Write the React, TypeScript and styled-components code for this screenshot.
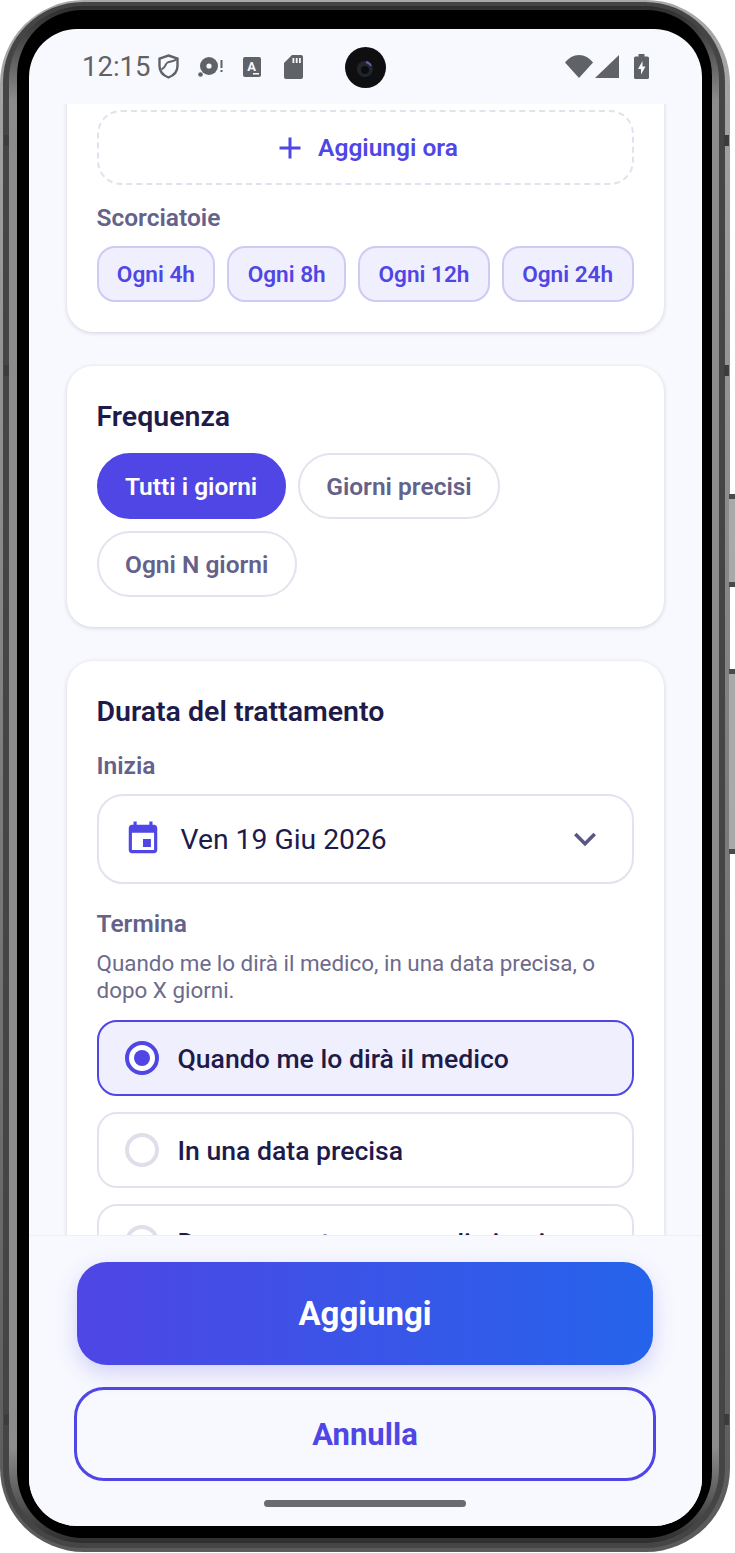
import React from "react";
import styled, { createGlobalStyle } from "styled-components";

const GlobalStyle = createGlobalStyle`
    html, body {
        margin: 0;
        padding: 0;
        background: #fff;
        font-family: Roboto, "Noto Sans", sans-serif;
    }
    * { box-sizing: border-box; }
`;

const Page = styled.div`
    position: relative;
    width: 735px;
    height: 1553px;
    overflow: hidden;
    background: #fff;
`;

const SideButton = styled.div<{ $top: number; $height: number }>`
    position: absolute;
    right: 0;
    top: ${(p) => p.$top}px;
    width: 6px;
    height: ${(p) => p.$height}px;
    background: #a9a9a9;
    border-top: 5px solid #4a4a4a;
    border-bottom: 5px solid #4a4a4a;
`;

const AntennaBand = styled.div<{ $top: number; $side: "left" | "right" }>`
    position: absolute;
    ${(p) => p.$side}: ${(p) => (p.$side === "left" ? 4 : 6)}px;
    top: ${(p) => p.$top}px;
    width: 5px;
    height: 11px;
    background: #3c3c3c;
`;

const PhoneShell = styled.div`
    width: 730px;
    height: 1552px;
    padding: 2px 5px 4px 3px;
    border-radius: 84px;
    background: linear-gradient(180deg, #a8a8a8, #7d7d7d 50%, #5a5a5a);
`;

const MidBand = styled.div`
    height: 100%;
    padding: 4px 6px 5px 6px;
    border-radius: 80px;
    background: #454545;
`;

const InnerBand = styled.div`
    height: 100%;
    padding: 4px 7px 5px 8px;
    border-radius: 74px;
    background: linear-gradient(
        180deg,
        #2e2e2e 0,
        #444 30px,
        #8c8c8c 95px,
        #8c8c8c calc(100% - 95px),
        #4a4a4a calc(100% - 30px),
        #2e2e2e 100%
    );
`;

const Bezel = styled.div`
    height: 100%;
    padding: 19px 10px 12px 12px;
    border-radius: 66px;
    background: #000;
`;

const Screen = styled.div`
    position: relative;
    display: flex;
    flex-direction: column;
    height: 100%;
    overflow: hidden;
    border-radius: 48px;
    background: #f8f9fe;
`;

const StatusBar = styled.div`
    flex: none;
    display: flex;
    align-items: center;
    height: 75px;
    padding: 0 53px 0 53px;
    color: #5f6368;
`;

const Clock = styled.span`
    font-size: 27.5px;
    margin-right: 8px;
    line-height: 1;
`;

const StatusIcon = styled.svg<{ $gap?: number }>`
    display: block;
    flex: none;
    margin-right: ${(p) => p.$gap ?? 0}px;
`;

const StatusRight = styled.div`
    margin-left: auto;
    display: flex;
    align-items: center;
    gap: 2px;
`;

const Camera = styled.div`
    position: absolute;
    left: 316px;
    top: 18px;
    width: 41px;
    height: 41px;
    border-radius: 50%;
    background: #0f0f12;
`;

const Lens = styled.svg`
    display: block;
`;

const ScrollArea = styled.div`
    flex: 1;
    min-height: 0;
    overflow: hidden;
    padding: 0 38.5px 0 37.5px;
`;

const Card = styled.section<{ $clipped?: boolean }>`
    padding: 30px;
    margin-top: ${(p) => (p.$clipped ? -24 : 0)}px;
    margin-bottom: 34px;
    background: #fff;
    border-radius: 26px;
    box-shadow: 0 1px 4px rgba(30, 27, 75, 0.18);
`;

const DashedButton = styled.div`
    display: flex;
    align-items: center;
    justify-content: center;
    gap: 10px;
    height: 75px;
    border: 2px dashed #e2e1ee;
    border-radius: 24px;
    color: #4f46e5;
    font-size: 24.5px;
    font-weight: 600;
`;

const FieldLabel = styled.div<{ $top?: number }>`
    margin-top: ${(p) => p.$top ?? 0}px;
    color: #64618a;
    font-size: 24.5px;
    font-weight: 600;
    line-height: 28px;
`;

const ChipRow = styled.div`
    display: flex;
    gap: 12px;
    margin-top: 14px;
`;

const Chip = styled.div`
    flex: 1 1 auto;
    display: flex;
    align-items: center;
    justify-content: center;
    height: 56px;
    padding: 0 18px;
    background: #f0effe;
    border: 2px solid #cdcaf4;
    border-radius: 18px;
    color: #4f46e5;
    font-size: 22.6px;
    font-weight: 600;
    white-space: nowrap;
`;

const CardTitle = styled.h2`
    margin: 5px 0 0;
    color: #1e1b4b;
    font-size: 28.5px;
    font-weight: 600;
    line-height: 32px;
`;

const PillRow = styled.div`
    display: flex;
    flex-wrap: wrap;
    gap: 12px;
    margin-top: 20px;
`;

const Pill = styled.div<{ $active?: boolean }>`
    display: flex;
    align-items: center;
    height: 66px;
    padding: 0 26.5px;
    border-radius: 33px;
    border: 2px solid ${(p) => (p.$active ? "#4f46e5" : "#e3e2ee")};
    background: ${(p) => (p.$active ? "#4f46e5" : "#fff")};
    color: ${(p) => (p.$active ? "#fff" : "#64618a")};
    font-size: 24.5px;
    font-weight: 600;
`;

const DateField = styled.div`
    display: flex;
    align-items: center;
    gap: 19px;
    height: 90px;
    margin-top: 14px;
    padding: 0 25px;
    border: 2px solid #e3e2ee;
    border-radius: 26px;
    color: #1e1b4b;
    font-size: 28.3px;
`;

const DateText = styled.span`
    flex: 1;
`;

const Hint = styled.p`
    margin: 12px 0 16px;
    color: #6d6a8c;
    font-size: 22.4px;
    line-height: 27px;
`;

const OptionList = styled.div`
    display: flex;
    flex-direction: column;
    gap: 16px;
`;

const Option = styled.div<{ $selected?: boolean }>`
    flex: none;
    display: flex;
    align-items: center;
    gap: 19px;
    height: 76px;
    padding: 0 26px;
    border: 2px solid ${(p) => (p.$selected ? "#4f46e5" : "#e3e2ee")};
    border-radius: 20px;
    background: ${(p) => (p.$selected ? "#f0effd" : "#fff")};
    color: #1e1b4b;
    font-size: 26.6px;
    font-weight: 500;
`;

const Radio = styled.span<{ $selected?: boolean }>`
    flex: none;
    display: flex;
    align-items: center;
    justify-content: center;
    width: 34px;
    height: 34px;
    border-radius: 50%;
    border: 4px solid ${(p) => (p.$selected ? "#4f46e5" : "#dfdeea")};
    background: #fff;
    &::after {
        content: "";
        display: ${(p) => (p.$selected ? "block" : "none")};
        width: 16px;
        height: 16px;
        border-radius: 50%;
        background: #4f46e5;
    }
`;

const Footer = styled.div`
    flex: none;
    display: flex;
    flex-direction: column;
    align-items: center;
    height: 291px;
    padding: 26px 1px 0 0;
    background: #f8f9fe;
    border-top: 1px solid #eeeef6;
`;

const PrimaryButton = styled.div`
    display: flex;
    align-items: center;
    justify-content: center;
    flex: none;
    width: 576px;
    height: 103px;
    border-radius: 30px;
    background: linear-gradient(90deg, #4f46e5, #2563eb);
    box-shadow: 0 8px 22px rgba(79, 70, 229, 0.22);
    color: #fff;
    font-size: 33px;
    font-weight: 700;
`;

const SecondaryButton = styled.div`
    display: flex;
    align-items: center;
    justify-content: center;
    flex: none;
    width: 582px;
    height: 94px;
    margin-top: 22px;
    border: 3px solid #4f46e5;
    border-radius: 30px;
    color: #4f46e5;
    font-size: 31px;
    font-weight: 700;
`;

const HomeBar = styled.div`
    width: 202px;
    height: 7px;
    margin-top: 19px;
    border-radius: 4px;
    background: #6a6b70;
`;

const App = () => {
    return (
        <Page>
            <GlobalStyle />
            <SideButton $top={494} $height={93} />
            <SideButton $top={669} $height={185} />
            <PhoneShell>
                <MidBand>
                    <InnerBand>
                        <Bezel>
                            <Screen>
                                <StatusBar>
                                    <Clock>12:15</Clock>
                                    <StatusIcon $gap={19} width="21" height="25" viewBox="0 0 21 25" fill="none" stroke="currentColor">
                                        <path d="M10.500 1.500 19.500 4.500V12c0 5.500-3.600 9.400-9 11.500C5.100 21.400 1.500 17.500 1.500 12V4.500Z" strokeWidth="2.400" />
                                        <path d="M3.500 15.500C8 13.500 7 10 9.500 8.500 12 7 15 8 18.500 5.500" strokeWidth="2" />
                                    </StatusIcon>
                                    <StatusIcon $gap={20} width="25" height="20" viewBox="0 0 25 20" fill="currentColor">
                                        <circle cx="11" cy="9" r="9" />
                                        <circle cx="11" cy="9" r="2.600" fill="#f8f9fe" />
                                        <circle cx="2.500" cy="17.500" r="2.300" />
                                        <rect x="22.500" y="3" width="2" height="8" />
                                        <rect x="22.500" y="13" width="2" height="2" />
                                    </StatusIcon>
                                    <StatusIcon $gap={23} width="18" height="20" viewBox="0 0 18 20">
                                        <rect width="18" height="20" rx="2" fill="currentColor" />
                                        <text x="8.500" y="13.500" textAnchor="middle" fontSize="13" fontWeight="700" fontFamily="Roboto" fill="#f8f9fe">A</text>
                                        <rect x="10" y="16" width="6" height="1.500" fill="#f8f9fe" />
                                    </StatusIcon>
                                    <StatusIcon width="19" height="24" viewBox="0 0 19 24" fill="currentColor">
                                        <path d="M8 0h9a2 2 0 0 1 2 2v20a2 2 0 0 1-2 2H2a2 2 0 0 1-2-2V8Z" />
                                        <path d="M8.500 3h1.800v5H8.500ZM11.800 3h1.800v5h-1.800ZM15 3h1.800v5H15Z" fill="#f8f9fe" />
                                    </StatusIcon>
                                    <StatusRight>
                                        <StatusIcon width="28" height="23" viewBox="0 0 28 23" fill="currentColor">
                                            <path d="M14 23 0 7.500C3.500 3 8.500 0 14 0s10.500 3 14 7.500Z" />
                                        </StatusIcon>
                                        <StatusIcon $gap={13} width="24" height="23" viewBox="0 0 24 23" fill="currentColor">
                                            <path d="M24 0V23H0Z" />
                                        </StatusIcon>
                                        <StatusIcon width="15" height="25" viewBox="0 0 15 25" fill="currentColor">
                                            <path fillRule="evenodd" d="M4.500 0h6v2.500H13.500a1.500 1.500 0 0 1 1.500 1.500v19.500a1.500 1.500 0 0 1-1.500 1.500H1.500A1.500 1.500 0 0 1 0 23.500V4a1.500 1.500 0 0 1 1.500-1.500H4.500ZM8.500 7 4 15h3v5.500L11.500 12.500h-3Z" />
                                        </StatusIcon>
                                    </StatusRight>
                                </StatusBar>
                                <Camera>
                                    <Lens width="41" height="41" viewBox="0 0 41 41">
                                        <circle cx="20" cy="22" r="8" fill="#20262b" />
                                        <circle cx="20" cy="23" r="4" fill="#0a0c10" />
                                        <path d="M21 15a7 7 0 0 1 5 4" stroke="#6d5aa8" strokeWidth="1.800" fill="none" />
                                    </Lens>
                                </Camera>
                                <ScrollArea>
                                    <Card $clipped>
                                        <DashedButton>
                                            <svg width="36" height="36" viewBox="0 0 24 24" fill="currentColor">
                                                <path d="M19 13h-6v6h-2v-6H5v-2h6V5h2v6h6v2z" />
                                            </svg>
                                            Aggiungi ora
                                        </DashedButton>
                                        <FieldLabel $top={19}>Scorciatoie</FieldLabel>
                                        <ChipRow>
                                            <Chip>Ogni 4h</Chip>
                                            <Chip>Ogni 8h</Chip>
                                            <Chip>Ogni 12h</Chip>
                                            <Chip>Ogni 24h</Chip>
                                        </ChipRow>
                                    </Card>
                                    <Card>
                                        <CardTitle>Frequenza</CardTitle>
                                        <PillRow>
                                            <Pill $active>Tutti i giorni</Pill>
                                            <Pill>Giorni precisi</Pill>
                                            <Pill>Ogni N giorni</Pill>
                                        </PillRow>
                                    </Card>
                                    <Card>
                                        <CardTitle>Durata del trattamento</CardTitle>
                                        <FieldLabel $top={24}>Inizia</FieldLabel>
                                        <DateField>
                                            <svg width="38" height="38" viewBox="0 0 24 24" fill="#4f46e5">
                                                <path d="M17 12h-5v5h5v-5zM16 1v2H8V1H6v2H5c-1.110 0-1.990.9-1.990 2L3 19c0 1.100.89 2 2 2h14c1.100 0 2-.9 2-2V5c0-1.100-.9-2-2-2h-1V1h-2zm3 18H5V8h14v11z" />
                                            </svg>
                                            <DateText>Ven 19 Giu 2026</DateText>
                                            <svg width="44" height="44" viewBox="0 0 24 24" fill="#5a5785">
                                                <path d="M16.590 8.590 12 13.170 7.410 8.590 6 10l6 6 6-6z" />
                                            </svg>
                                        </DateField>
                                        <FieldLabel $top={26}>Termina</FieldLabel>
                                        <Hint>Quando me lo dirà il medico, in una data precisa, o dopo X giorni.</Hint>
                                        <OptionList>
                                            <Option $selected>
                                                <Radio $selected />
                                                Quando me lo dirà il medico
                                            </Option>
                                            <Option>
                                                <Radio />
                                                In una data precisa
                                            </Option>
                                            <Option>
                                                <Radio />
                                                Dopo un certo numero di giorni
                                            </Option>
                                        </OptionList>
                                    </Card>
                                </ScrollArea>
                                <Footer>
                                    <PrimaryButton>Aggiungi</PrimaryButton>
                                    <SecondaryButton>Annulla</SecondaryButton>
                                    <HomeBar />
                                </Footer>
                            </Screen>
                        </Bezel>
                    </InnerBand>
                </MidBand>
            </PhoneShell>
            <AntennaBand $side="left" $top={135} />
            <AntennaBand $side="left" $top={365} />
            <AntennaBand $side="left" $top={1414} />
            <AntennaBand $side="right" $top={135} />
            <AntennaBand $side="right" $top={365} />
            <AntennaBand $side="right" $top={1414} />
        </Page>
    );
};

export default App;
